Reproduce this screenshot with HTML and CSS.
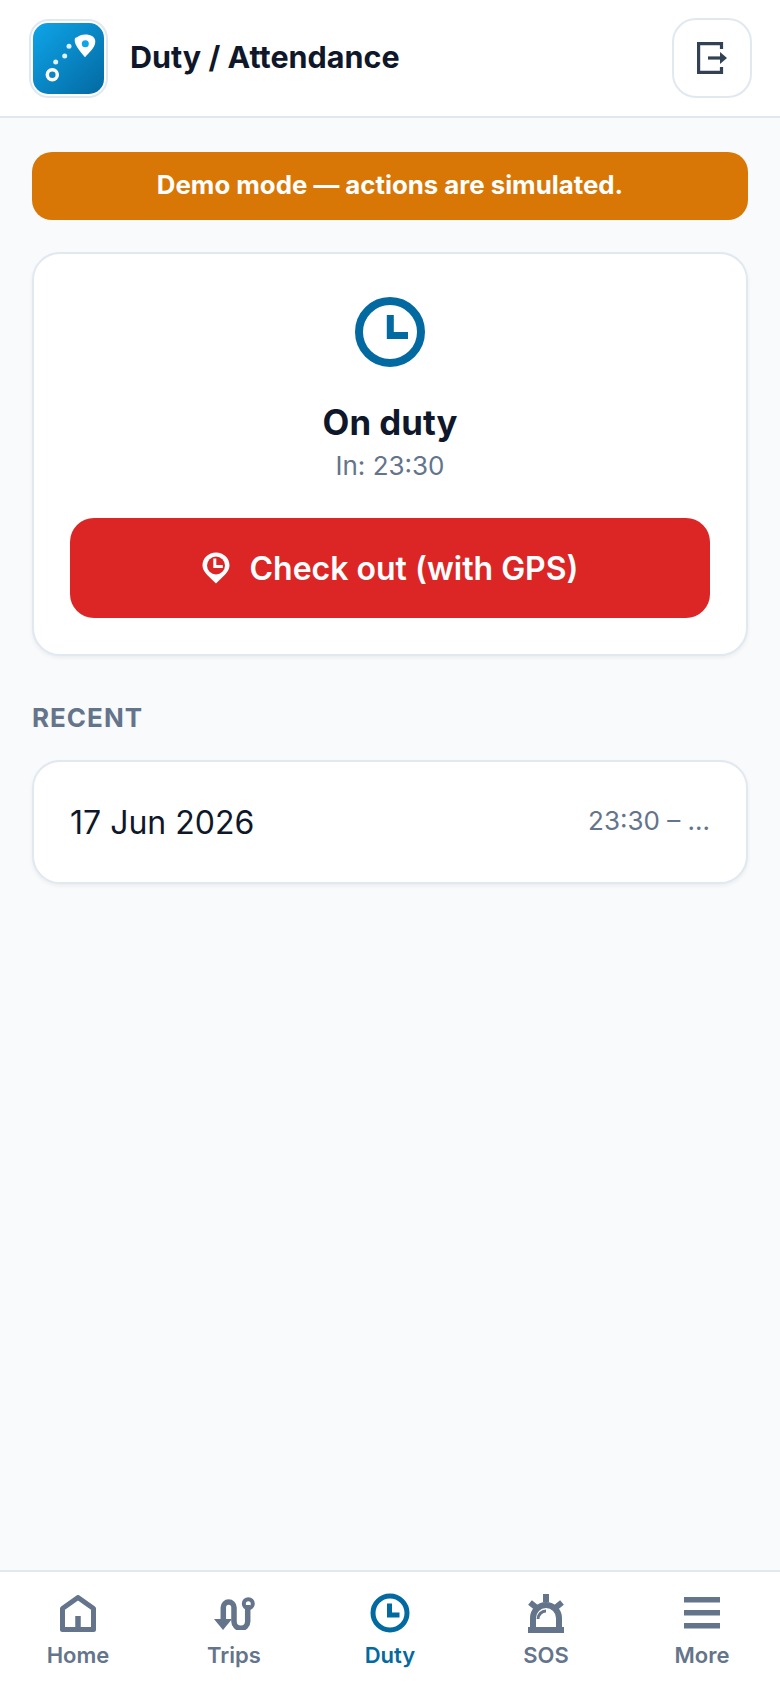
FILE: index.html
```html
<!DOCTYPE html>
<html lang="en">
<head>
    <meta charset="UTF-8">
    <meta name="viewport" content="width=device-width, initial-scale=1.0">
    <title>Duty / Attendance</title>
    <link rel="stylesheet" href="styles.css">
</head>
<body>
    <div class="app">
        <header class="topbar">
            <div class="brand">
                <div class="logo">
                    <svg viewBox="0 0 71 71" width="71" height="71">
                        <defs>
                            <linearGradient id="logoGrad" x1="0" y1="0" x2="1" y2="1">
                                <stop offset="0" stop-color="#0ea5e9"/>
                                <stop offset="1" stop-color="#0369a1"/>
                            </linearGradient>
                        </defs>
                        <rect width="71" height="71" rx="15" fill="url(#logoGrad)"/>
                        <circle cx="19.300" cy="51.700" r="5" fill="none" stroke="#fff" stroke-width="3.500"/>
                        <circle cx="22.700" cy="39" r="2.500" fill="#e0f2fe"/>
                        <circle cx="31.700" cy="33" r="2.500" fill="#e0f2fe"/>
                        <circle cx="36" cy="23.300" r="2.500" fill="#e0f2fe"/>
                        <path d="M52 11.500c-3 0-6 1-7.500 2.500L42 15c-.5 2-.3 4 .5 6 1.500 4 5.500 8.500 9.500 13.300 4-4.800 10.300-9.500 10.300-15.800 0-4.500-4.300-7-10.300-7z" fill="#fff"/>
                        <circle cx="52.300" cy="20.700" r="3.500" fill="#0ea5e9"/>
                    </svg>
                </div>
                <h1>Duty / Attendance</h1>
            </div>
            <button class="icon-btn" aria-label="Log out">
                <svg viewBox="0 0 30 32" width="30" height="32" fill="none" stroke="#334155" stroke-width="3.200">
                    <path d="M24.500 7V1.600H1.600v28.800h22.900V25"/>
                    <path d="M11 16h13"/>
                    <path d="M23 10l7 6-7 6z" fill="#334155" stroke="none"/>
                </svg>
            </button>
        </header>

        <main class="content">
            <div class="banner">Demo mode — actions are simulated.</div>

            <section class="card status">
                <svg class="status-icon" viewBox="0 0 72 72" width="72" height="72" fill="none" stroke="#0369a1" stroke-width="8">
                    <circle cx="36" cy="36" r="31"/>
                    <path d="M36.300 19V39.500H54" stroke-width="7"/>
                </svg>
                <div class="status-title">On duty</div>
                <div class="status-sub">In: 23:30</div>
                <button class="checkout">
                    <svg viewBox="0 0 28 32" width="28" height="32">
                        <path d="M14 31.500C8 25 .5 20.500.5 13.500.5 6 6.500.5 14 .5S27.500 6 27.500 13.500c0 7-7.500 11.500-13.500 18z" fill="#fff"/>
                        <circle cx="14" cy="13.500" r="9" fill="#dc2626"/>
                        <path d="M12.800 6.500v8h8" fill="none" stroke="#fff" stroke-width="3"/>
                    </svg>
                    Check out (with GPS)
                </button>
            </section>

            <h2 class="section-label">RECENT</h2>

            <section class="card recent-row">
                <span class="recent-date">17 Jun 2026</span>
                <span class="recent-time">23:30 – ...</span>
            </section>
        </main>

        <nav class="tabbar">
            <a class="tab">
                <span class="tab-icon">
                    <svg viewBox="0 0 36 37" width="36" height="37" fill="none" stroke="currentColor" stroke-width="5" stroke-linejoin="round">
                        <path d="M2.500 34.500V13.500L18 2.500 33.500 13.500V34.500z"/>
                        <path d="M18 34V21" stroke-width="5.500"/>
                    </svg>
                </span>
                <span>Home</span>
            </a>
            <a class="tab">
                <span class="tab-icon">
                    <svg viewBox="0 0 41 33" width="41" height="33" fill="none" stroke="currentColor" stroke-width="5.500">
                        <path d="M9.300 24V10.400a5.350 5.350 0 0 1 10.700 0V24.500a6.850 6.850 0 0 0 13.700 0V8"/>
                        <path d="M0 22h18l-9 11z" fill="currentColor" stroke="none"/>
                        <circle cx="34.300" cy="6.700" r="4.500" stroke-width="4"/>
                    </svg>
                </span>
                <span>Trips</span>
            </a>
            <a class="tab active">
                <span class="tab-icon">
                    <svg viewBox="0 0 40 40" width="40" height="40" fill="none" stroke="currentColor" stroke-width="5">
                        <circle cx="20" cy="20" r="17"/>
                        <path d="M19.500 10.500V22H29.500"/>
                    </svg>
                </span>
                <span>Duty</span>
            </a>
            <a class="tab">
                <span class="tab-icon">
                    <svg viewBox="0 0 36 39" width="36" height="39" fill="none" stroke="currentColor" stroke-width="6">
                        <path d="M5 34V24a13 13 0 0 1 26 0v10"/>
                        <path d="M0 36h36"/>
                        <path d="M18 0v8M2 8.500L9.500 14.500M34 8.500L26.500 14.500"/>
                        <path d="M10 25a8 8 0 0 1 8-8" stroke-width="3"/>
                    </svg>
                </span>
                <span>SOS</span>
            </a>
            <a class="tab">
                <span class="tab-icon">
                    <svg viewBox="0 0 36 32" width="36" height="32" fill="currentColor">
                        <rect width="36" height="5.500"/>
                        <rect y="13" width="36" height="5.500"/>
                        <rect y="26" width="36" height="5.500"/>
                    </svg>
                </span>
                <span>More</span>
            </a>
        </nav>
    </div>
</body>
</html>
```

FILE: styles.css
```css
* {
    box-sizing: border-box;
}
body {
    font-family: Inter, "Liberation Sans", sans-serif;
    background-color: #f8fafc;
    color: #0f172a;
    margin: 0;
}
.app {
    display: flex;
    flex-direction: column;
    height: 1688px;
}
.topbar {
    height: 118px;
    background: #fff;
    border-bottom: 2px solid #e2e8f0;
    padding: 0 28px 0 29px;
    display: flex;
    justify-content: space-between;
    align-items: center;
}
.brand {
    display: flex;
    align-items: center;
    gap: 22px;
}
.logo {
    width: 79px;
    height: 79px;
    padding: 2px;
    border: 2px solid #e2e8f0;
    border-radius: 20px;
    background: #fff;
}
.logo svg {
    display: block;
}
h1 {
    font-size: 30.5px;
    font-weight: 700;
    margin: 0 0 3px;
}
.icon-btn {
    width: 80px;
    height: 80px;
    background: #fff;
    border: 2px solid #e2e8f0;
    border-radius: 24px;
    display: flex;
    align-items: center;
    justify-content: center;
    padding: 0;
}
.content {
    flex: 1;
    padding: 34px 32px 0;
}
.banner {
    height: 68px;
    padding-bottom: 3px;
    background: #d97706;
    color: #fff;
    border-radius: 20px;
    font-size: 25.8px;
    font-weight: 700;
    display: flex;
    align-items: center;
    justify-content: center;
    margin-bottom: 32px;
}
.card {
    background: #fff;
    border: 2px solid #e2e8f0;
    border-radius: 28px;
    box-shadow: 0 2px 4px rgba(15, 23, 42, 0.06);
}
.status {
    padding: 42px 36px 36px;
    display: flex;
    flex-direction: column;
    align-items: center;
}
.status-icon {
    display: block;
    margin-bottom: 28px;
}
.status-title {
    font-size: 34.8px;
    font-weight: 700;
    line-height: 52px;
}
.status-sub {
    font-size: 26px;
    color: #64748b;
    line-height: 36px;
    margin-bottom: 34px;
}
.checkout {
    width: 100%;
    height: 100px;
    background: #dc2626;
    color: #fff;
    border: none;
    border-radius: 24px;
    font-family: inherit;
    font-size: 32px;
    font-weight: 600;
    display: flex;
    align-items: center;
    justify-content: center;
    gap: 20px;
}
.section-label {
    font-size: 26px;
    font-weight: 700;
    letter-spacing: 1px;
    color: #64748b;
    margin: 44px 0 24px;
    line-height: 36px;
}
.recent-row {
    height: 124px;
    padding: 0 36px;
    display: flex;
    align-items: center;
    justify-content: space-between;
}
.recent-date {
    font-size: 32px;
}
.recent-time {
    font-size: 26px;
    color: #64748b;
    margin-bottom: 3px;
}
.tabbar {
    height: 118px;
    background: #fff;
    border-top: 2px solid #e2e8f0;
    display: grid;
    grid-template-columns: repeat(5, 1fr);
}
.tab {
    color: #64748b;
    display: flex;
    flex-direction: column;
    align-items: center;
    padding-top: 21px;
    font-size: 22px;
    font-weight: 600;
}
.tab-icon {
    height: 40px;
    display: flex;
    align-items: center;
    margin-bottom: 9px;
}
.tab-icon svg {
    display: block;
}
.tab.active {
    color: #0369a1;
}
```
